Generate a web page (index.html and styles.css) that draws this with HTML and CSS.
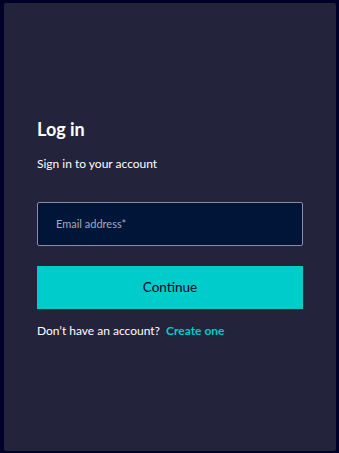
FILE: index.html
```html
<!DOCTYPE html>
<html lang="en">
<head>
    <meta charset="UTF-8">
    <meta name="viewport" content="width=device-width, initial-scale=1.0">
    <title>Log in</title>
    <link rel="stylesheet" href="styles.css">
</head>
<body>
    <div class="card">
        <div class="login">
            <h1>Log in</h1>
            <p class="subtitle">Sign in to your account</p>
            <form class="login-form" novalidate>
                <input type="email" class="field" placeholder="Email address*">
                <button type="submit">Continue</button>
            </form>
            <p class="signup">Don’t have an account? <a href="#">Create one</a></p>
        </div>
    </div>
</body>
</html>
```

FILE: styles.css
```css
html, body {
    height: 100%;
}
body {
    font-family: Lato, 'Noto Sans', sans-serif;
    background-color: #000028;
    margin: 0;
    padding: 3px 3px 2px 4px;
    box-sizing: border-box;
    display: flex;
}
.card {
    flex: 1;
    background-color: #23233c;
    border-radius: 2px;
    display: flex;
    align-items: center;
    padding: 0 33px;
}
.login {
    width: 100%;
    margin-top: 2px;
}
h1 {
    color: #ffffff;
    font-size: 18px;
    font-weight: 700;
    margin: 0 0 14px;
    line-height: 24px;
}
.subtitle {
    color: #ffffff;
    font-size: 12px;
    margin: 0 0 29px;
    line-height: 18px;
}
.login-form {
    display: flex;
    flex-direction: column;
    gap: 20px;
}
.field {
    height: 44px;
    box-sizing: border-box;
    background-color: #001538;
    border: 1px solid #8c8ca8;
    border-radius: 2px;
    padding: 0 18px;
    font-family: inherit;
    font-size: 11px;
    color: #ffffff;
}
.field::placeholder {
    color: #a3a9c2;
}
.field:focus {
    outline: none;
}
button {
    height: 43px;
    background-color: #00cccc;
    color: #000028;
    border: none;
    font-family: inherit;
    font-size: 13.5px;
    cursor: pointer;
}
.signup {
    color: #ffffff;
    font-size: 12px;
    margin: 13px 0 0;
    line-height: 18px;
}
.signup a {
    color: #00cccc;
    text-decoration: none;
    font-weight: 700;
    margin-left: 3px;
}
```
